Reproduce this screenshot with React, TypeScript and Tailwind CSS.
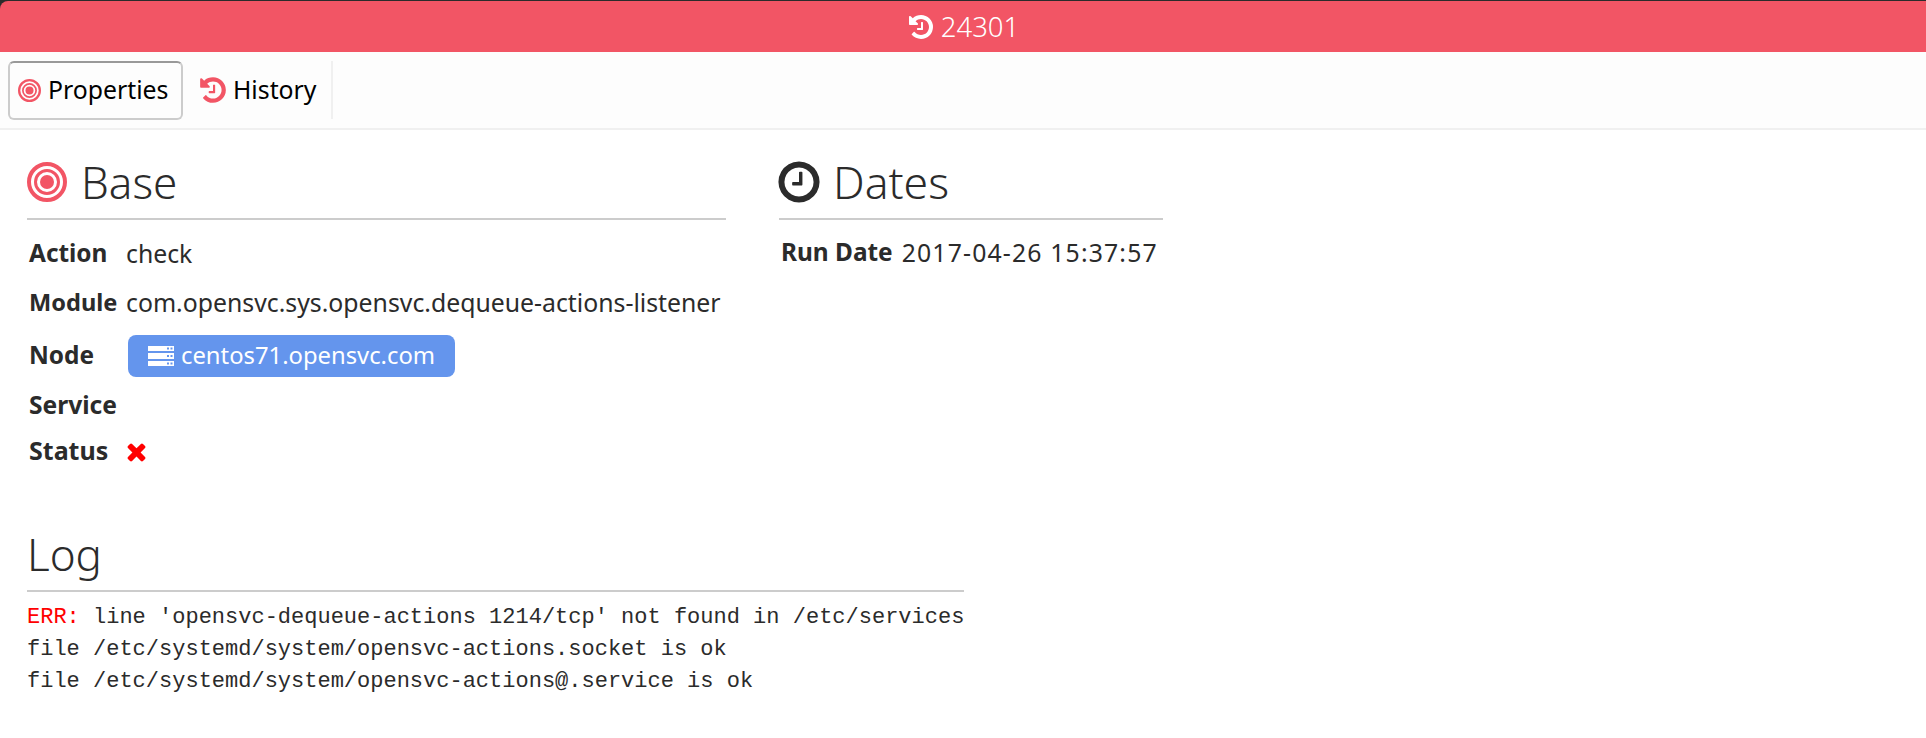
import React from 'react';

const HISTORY =
  'M1664 896q0 156-61 298t-164 245-245 164-298 61q-172 0-327-72.5t-264-204.5q-7-10-6.5-22.5t8.5-20.5l137-138q10-9 25-9 16 2 23 12 73 95 179 147t225 52q104 0 198.5-40.5t163.5-109.5 109.5-163.5 40.5-198.5-40.5-198.5-109.5-163.5-163.5-109.5-198.5-40.5q-98 0-188 35.5t-160 101.5l137 138q31 30 14 69-17 40-59 40h-448q-26 0-45-19t-19-45v-448q0-42 40-59 39-17 69 14l130 129q107-101 244.5-156.5t284.5-55.5q156 0 298 61t245 164 164 245 61 298zm-640-288v448q0 14-9 23t-23 9h-320q-14 0-23-9t-9-23v-64q0-14 9-23t23-9h224v-352q0-14 9-23t23-9h64q14 0 23 9t9 23z';
const CLOCK =
  'M1024 544v448q0 14-9 23t-23 9h-320q-14 0-23-9t-9-23v-64q0-14 9-23t23-9h224v-352q0-14 9-23t23-9h64q14 0 23 9t9 23zm416 352q0-148-73-273t-198-198-273-73-273 73-198 198-73 273 73 273 198 198 273 73 273-73 198-198 73-273zm224 0q0 209-103 385.5t-279.5 279.5-385.5 103-385.5-103-279.5-279.5-103-385.5 103-385.5 279.5-279.5 385.5-103 385.5 103 279.5 279.5 103 385.5z';
const CLOSE =
  'M1490 1322q0 40-28 68l-136 136q-28 28-68 28t-68-28l-294-294-294 294q-28 28-68 28t-68-28l-136-136q-28-28-28-68t28-68l294-294-294-294q-28-28-28-68t28-68l136-136q28-28 68-28t68 28l294 294 294-294q28-28 68-28t68 28l136 136q28 28 28 68t-28 68l-294 294 294 294q28 28 28 68z';

const Fa = ({ d, className }: { d: string; className: string }) => (
  <svg viewBox="0 0 1792 1792" fill="currentColor" className={className}>
    <path d={d} />
  </svg>
);

const Target = ({ className }: { className: string }) => (
  <svg viewBox="0 0 40 40" className={className}>
    <circle cx="20" cy="20" r="18" fill="none" stroke="currentColor" strokeWidth="4" />
    <circle cx="20" cy="20" r="11.5" fill="none" stroke="currentColor" strokeWidth="3" />
    <circle cx="20" cy="20" r="7" fill="currentColor" />
  </svg>
);

const Server = ({ className }: { className: string }) => (
  <svg viewBox="0 0 26 20" className={className}>
    <path
      fill="currentColor"
      fillRule="evenodd"
      d="M0 0h26v5H0zM19 1.5h2v2h-2zM22.500 1.500h2v2h-2zM0 7h26v6H0zM19 9h2v2h-2zM22.500 9h2v2h-2zM0 15h26v5H0zM19 16.500h2v2h-2zM22.500 16.500h2v2h-2z"
    />
  </svg>
);

export default function App() {
  return (
    <div className="h-[738px] overflow-hidden bg-white font-['Noto_Sans',sans-serif] text-[24.8px] text-[#2b2b2b]">
      <div className="bg-[#2b2b2b] pt-px">
        <div className="flex h-[51px] items-center justify-center gap-[6px] rounded-tl-[8px] bg-[#f25565] text-[27.5px] font-light text-white">
          <Fa d={HISTORY} className="size-7" />
          <span>24301</span>
        </div>
      </div>

      <div className="flex h-[78px] items-center border-b-2 border-[#f0f0f0] bg-[#fdfdfd] pl-2">
        <div className="flex h-[59px] w-[175px] items-center gap-[7px] rounded-md border-2 border-[#cccccc] border-t-[#999999] pl-[8px] text-black">
          <Target className="size-[23px] text-[#f25565]" />
          <span>Properties</span>
        </div>
        <div className="flex h-[58px] w-[150px] items-center gap-[5px] border-r-2 border-[#f0f0f0] pl-[15px] text-black">
          <Fa d={HISTORY} className="size-[30px] text-[#f25565]" />
          <span>History</span>
        </div>
      </div>

      <div className="flex pl-[27px] pt-[27px]">
        <section className="w-[699px]">
          <h2 className="flex h-[63px] items-center gap-[14px] border-b-2 border-[#cccccc] pb-[11px] text-[44px] font-light">
            <Target className="size-10 text-[#f25565]" />
            Base
          </h2>
          <div className="grid grid-cols-[97px_1fr] pl-[2px] pt-[9px]">
            <b className="flex h-[49px] items-center text-[24.4px] font-bold">Action</b>
            <span className="flex h-[49px] items-center">check</span>
            <b className="flex h-[49px] items-center text-[23.6px] font-bold">Module</b>
            <span className="flex h-[49px] items-center">com.opensvc.sys.opensvc.dequeue-actions-listener</span>
            <b className="flex h-[57px] items-center text-[24.4px] font-bold">Node</b>
            <span className="flex h-[57px] items-center">
              <span className="ml-[2px] flex h-[42px] w-[327px] items-center gap-[7px] rounded-lg bg-[#6495ed] pl-5 text-[23.8px] text-white">
                <Server className="h-[20px] w-[26px]" />
                centos71.opensvc.com
              </span>
            </span>
            <b className="flex h-[43px] items-center text-[24.6px] font-bold">Service</b>
            <span />
            <b className="flex h-[48px] items-center text-[25px] font-bold">Status</b>
            <span className="flex h-[48px] items-center">
              <Fa d={CLOSE} className="-ml-[3px] size-[27px] text-[#ff0000]" />
            </span>
          </div>
        </section>

        <section className="ml-[53px] w-[384px]">
          <h2 className="flex h-[63px] items-center gap-[10px] border-b-2 border-[#cccccc] pb-[11px] text-[44.5px] font-light">
            <Fa d={CLOCK} className="-ml-[4px] size-[48px]" />
            Dates
          </h2>
          <div className="flex h-[49px] items-center gap-[9px] pl-[2px] pt-[16px]">
            <b className="text-[24.4px] font-bold">Run Date</b>
            <span className="tracking-[1.15px]">2017-04-26 15:37:57</span>
          </div>
        </section>
      </div>

      <section className="ml-[27px] mt-[51px] w-[937px]">
        <h2 className="h-[66px] border-b-2 border-[#cccccc] text-[44px] font-light leading-[56px]">Log</h2>
        <pre className="pt-[10px] font-['Liberation_Mono',monospace] text-[22px] leading-[32px]">
          <span className="text-[#ff0000]">ERR:</span>
          {" line 'opensvc-dequeue-actions 1214/tcp' not found in /etc/services\n"}
          {'file /etc/systemd/system/opensvc-actions.socket is ok\n'}
          {'file /etc/systemd/system/opensvc-actions@.service is ok'}
        </pre>
      </section>
    </div>
  );
}
